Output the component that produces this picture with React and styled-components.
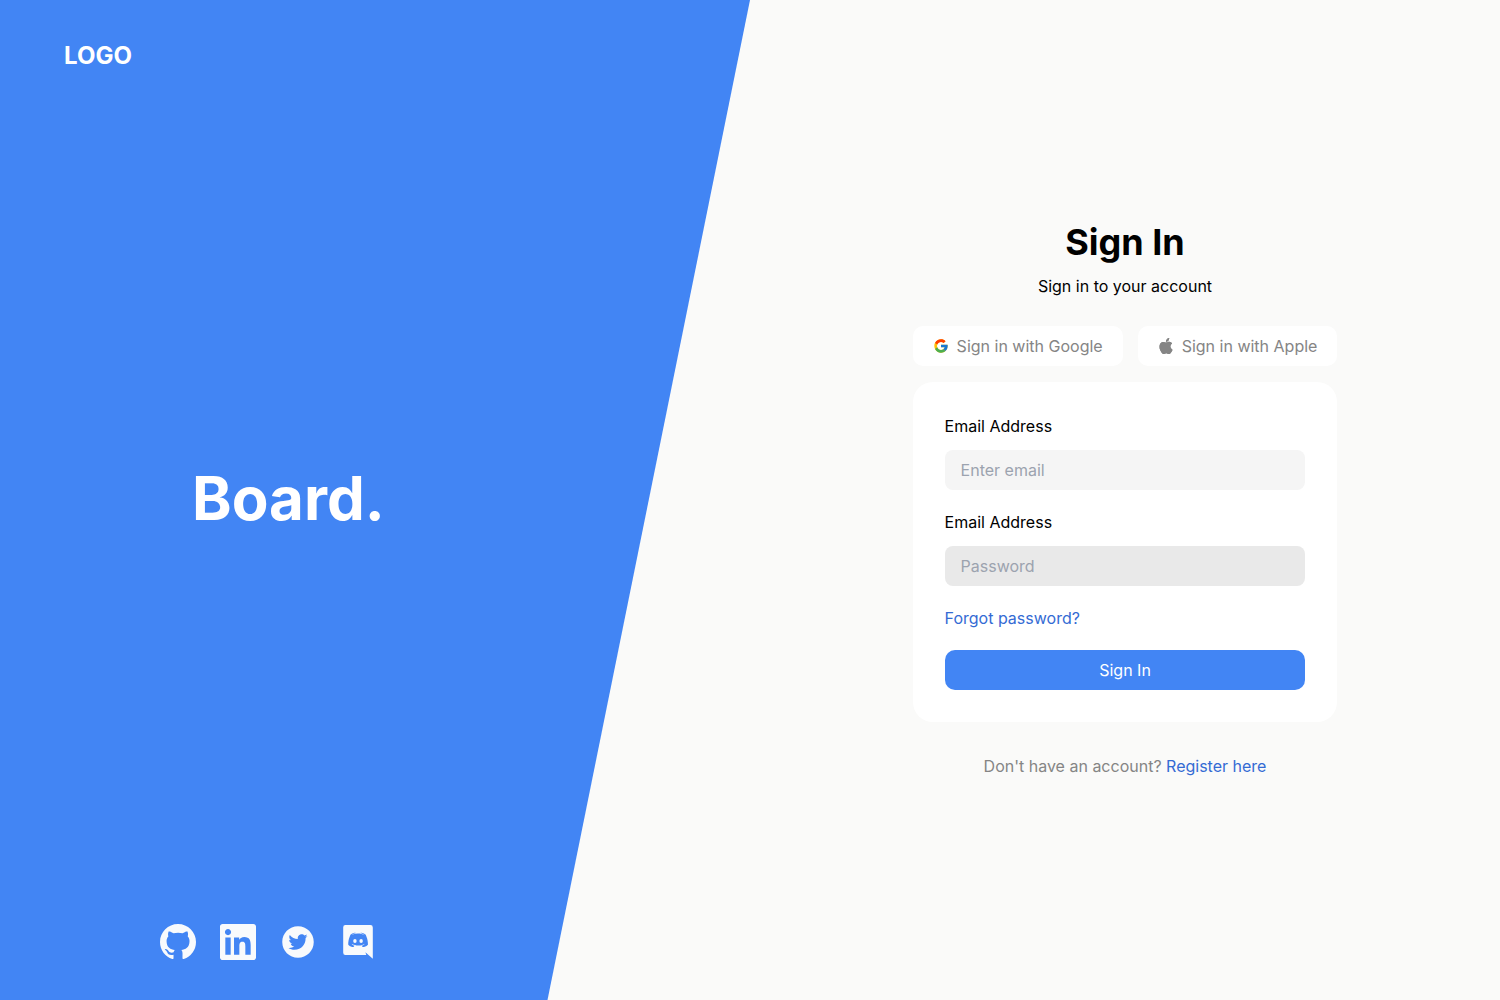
import React from 'react';
import styled, { createGlobalStyle } from 'styled-components';
import { FcGoogle } from 'react-icons/fc';
import { BsApple, BsGithub } from 'react-icons/bs';
import { AiFillTwitterCircle } from 'react-icons/ai';

const GlobalStyle = createGlobalStyle`
  *, *::before, *::after { box-sizing: border-box; }
  body {
    margin: 0;
    background: #fafaf9;
    color: #000;
    font-family: Inter, "Liberation Sans", sans-serif;
    font-size: 16px;
    line-height: 24px;
  }
  h1, h2, p { margin: 0; }
  a { color: inherit; text-decoration: none; }
  input, button { font: inherit; }
`;

const Page = styled.main`
  display: grid;
  grid-template-columns: 1fr 1fr;
  min-height: 100vh;
`;

const Brand = styled.section`
  display: flex;
  flex-direction: column;
  justify-content: space-between;
  padding: 40px 64px;
  background: #4285f4;
  color: #fff;
  clip-path: polygon(0 0, 100% 0, 73% 100%, 0 100%);
`;

const Logo = styled.a`
  font-size: 24px;
  line-height: 32px;
  font-weight: 700;
`;

const BrandName = styled.h1`
  padding-left: 128px;
  font-size: 60px;
  line-height: 60px;
  font-weight: 700;
`;

const Socials = styled.nav`
  display: flex;
  gap: 24px;
  padding-left: 96px;
`;

const SocialLink = styled.a`
  display: flex;
  color: #f8fafc;
  font-size: 36px;
`;

const Account = styled.section`
  display: flex;
  align-items: center;
  justify-content: center;
`;

const Column = styled.div`
  display: flex;
  flex-direction: column;
`;

const Title = styled.h2`
  font-size: 36px;
  line-height: 40px;
  font-weight: 700;
  text-align: center;
`;

const Subtitle = styled.p`
  padding: 12px 0 28px;
  text-align: center;
`;

const Providers = styled.div`
  display: flex;
  justify-content: space-between;
  gap: 15px;
`;

const ProviderButton = styled.button`
  display: flex;
  align-items: center;
  gap: 8px;
  height: 40px;
  padding: 0 20px;
  border: 0;
  border-radius: 10px;
  background: #fff;
  color: #858585;
  cursor: pointer;
`;

const Form = styled.form`
  display: flex;
  flex-direction: column;
  margin-top: 16px;
  padding: 32px;
  border-radius: 20px;
  background: #fff;
`;

const Label = styled.label`
  margin-bottom: 12px;
`;

const Field = styled.input`
  width: 100%;
  height: 40px;
  margin-bottom: 20px;
  padding: 0 16px;
  border: 0;
  border-radius: 8px;
  background: ${({ $shade }) => $shade};
  color: #000;
  &::placeholder { color: #9ca3af; opacity: 1; }
`;

const TextLink = styled.a`
  color: #346bd4;
`;

const SubmitButton = styled.button`
  height: 40px;
  margin-top: 20px;
  border: 0;
  border-radius: 10px;
  background: #4285f4;
  color: #fff;
  cursor: pointer;
`;

const Register = styled.p`
  padding-top: 32px;
  color: #858585;
  text-align: center;
`;

function LinkedinIcon() {
  return (
    <svg width="1em" height="1em" viewBox="0 0 24 24" fill="currentColor" aria-hidden="true">
      <path d="M20.447 20.452h-3.554v-5.569c0-1.328-.027-3.037-1.852-3.037-1.853 0-2.136 1.445-2.136 2.939v5.667H9.351V9h3.414v1.561h.046c.477-.9 1.637-1.85 3.37-1.85 3.601 0 4.267 2.37 4.267 5.455v6.286zM5.337 7.433c-1.144 0-2.063-.926-2.063-2.065 0-1.138.92-2.063 2.063-2.063 1.14 0 2.064.925 2.064 2.063 0 1.139-.925 2.065-2.064 2.065zm1.782 13.019H3.555V9h3.564v11.452zM22.225 0H1.771C.792 0 0 .774 0 1.729v20.542C0 23.227.792 24 1.771 24h20.451C23.2 24 24 23.227 24 22.271V1.729C24 .774 23.2 0 22.222 0h.003z" />
    </svg>
  );
}

function DiscordIcon() {
  return (
    <svg width="1em" height="1em" viewBox="0 0 36 36" fill="none" aria-hidden="true">
      <path fill="currentColor" d="M5.4 1.1h25a2.4 2.4 0 0 1 2.4 2.4v31.3l-7.4-6.5.9 2.6H5.4a2.2 2.2 0 0 1-2.2-2.2V3.3a2.2 2.2 0 0 1 2.2-2.2z" />
      <path fill="#4285f4" transform="translate(3.17 .9) scale(.0662)" d="M375.04 295.424c0-82.432-36.864-149.248-36.864-149.248-36.864-27.648-71.936-26.88-71.936-26.88l-3.584 4.096c43.52 13.312 63.744 32.512 63.744 32.512-60.811-33.329-132.244-33.335-191.232-7.424-9.472 4.352-15.104 7.424-15.104 7.424s21.248-20.224 67.328-33.536l-2.56-3.072s-35.072-.768-71.936 26.88c0 0-36.864 66.816-36.864 149.248 0 0 21.504 37.12 78.08 38.912 0 0 9.472-11.52 17.152-21.248-32.512-9.728-44.8-30.208-44.8-30.208 3.766 2.636 9.976 6.053 10.496 6.4 43.21 24.198 104.588 32.126 159.744 8.96 8.96-3.328 18.944-8.192 29.44-15.104 0 0-12.8 20.992-46.336 30.464 7.68 9.728 16.896 20.736 16.896 20.736 56.576-1.792 78.336-38.912 78.336-38.912z" />
      <g fill="currentColor" transform="translate(3.17 .9) scale(.0662)">
        <ellipse cx="177.6" cy="243.2" rx="26.1" ry="28.4" />
        <ellipse cx="271.1" cy="243.2" rx="26.1" ry="28.4" />
      </g>
    </svg>
  );
}

export default function App() {
  return (
    <>
      <GlobalStyle />
      <Page>
        <Brand>
          <Logo href="#">LOGO</Logo>
          <BrandName>Board.</BrandName>
          <Socials aria-label="Social links">
            <SocialLink href="#" aria-label="GitHub"><BsGithub /></SocialLink>
            <SocialLink href="#" aria-label="LinkedIn"><LinkedinIcon /></SocialLink>
            <SocialLink href="#" aria-label="Twitter"><AiFillTwitterCircle /></SocialLink>
            <SocialLink href="#" aria-label="Discord"><DiscordIcon /></SocialLink>
          </Socials>
        </Brand>
        <Account>
          <Column>
            <Title>Sign In</Title>
            <Subtitle>Sign in to your account</Subtitle>
            <Providers>
              <ProviderButton type="button"><FcGoogle />Sign in with Google</ProviderButton>
              <ProviderButton type="button"><BsApple />Sign in with Apple</ProviderButton>
            </Providers>
            <Form onSubmit={(event) => event.preventDefault()}>
              <Label htmlFor="email">Email Address</Label>
              <Field id="email" type="email" placeholder="Enter email" $shade="#f5f5f5" />
              <Label htmlFor="password">Email Address</Label>
              <Field id="password" type="password" placeholder="Password" $shade="#e9e9e9" />
              <TextLink href="#">Forgot password?</TextLink>
              <SubmitButton type="submit">Sign In</SubmitButton>
            </Form>
            <Register>
              Don't have an account? <TextLink href="#">Register here</TextLink>
            </Register>
          </Column>
        </Account>
      </Page>
    </>
  );
}
